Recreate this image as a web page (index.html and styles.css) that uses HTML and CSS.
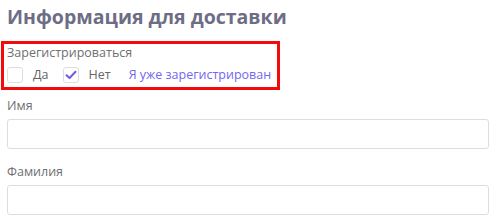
FILE: index.html
```html
<!DOCTYPE html>
<html lang="ru">
<head>
  <meta charset="UTF-8">
  <meta name="viewport" content="width=device-width, initial-scale=1.0">
  <title>Информация для доставки</title>
  <link rel="stylesheet" href="styles.css">
</head>
<body>
  <div class="container">
    <h1>Информация для доставки</h1>
    <div class="register-box">
      <div class="field-label">Зарегистрироваться</div>
      <div class="options">
        <label class="option">
          <span class="checkbox"></span>
          <span>Да</span>
        </label>
        <label class="option">
          <span class="checkbox checked">
            <svg width="12" height="10" viewBox="0 0 12 10"><path d="M1.5 5.2 L4.6 8 L10.5 1.8" fill="none" stroke="#6c5ce7" stroke-width="2" stroke-linecap="round" stroke-linejoin="round"/></svg>
          </span>
          <span>Нет</span>
        </label>
        <a class="login-link" href="#">Я уже зарегистрирован</a>
      </div>
    </div>
    <div class="form-row">
      <div class="field-label">Имя</div>
      <input type="text" class="text-input">
    </div>
    <div class="form-row">
      <div class="field-label">Фамилия</div>
      <input type="text" class="text-input">
    </div>
  </div>
</body>
</html>
```

FILE: styles.css
```css
body {
  margin: 0;
  padding: 0;
  background: #fff;
  font-family: "Open Sans", Arial, sans-serif;
  color: #666;
}
.container {
  padding: 0 11px 0 7px;
}
h1 {
  margin: 0;
  padding-top: 3px;
  font-size: 19.5px;
  line-height: 28px;
  font-weight: 700;
  color: #6e6d86;
}
.register-box {
  display: inline-block;
  margin: 10px 0 0 -6px;
  padding: 0 6px 0 3px;
  border: 3px solid #f40a0a;
}
.field-label {
  font-size: 12.5px;
  line-height: 18px;
  color: #707070;
}
.options {
  display: flex;
  align-items: center;
  height: 25px;
  font-size: 12.5px;
}
.option {
  display: flex;
  align-items: center;
  margin-right: 14px;
}
.checkbox {
  box-sizing: border-box;
  width: 16px;
  height: 16px;
  margin-right: 10px;
  border: 1px solid #ddd;
  border-radius: 3px;
  display: flex;
  align-items: center;
  justify-content: center;
}
.login-link {
  color: #7466f0;
  text-decoration: none;
  margin-left: 4px;
}
.form-row {
  margin-top: 7px;
}
.form-row + .form-row {
  margin-top: 14px;
}
.form-row .field-label {
  margin-bottom: 4px;
}
.text-input {
  box-sizing: border-box;
  display: block;
  width: 100%;
  height: 30px;
  border: 1px solid #ddd;
  border-radius: 3px;
  padding: 0 8px;
}
```
